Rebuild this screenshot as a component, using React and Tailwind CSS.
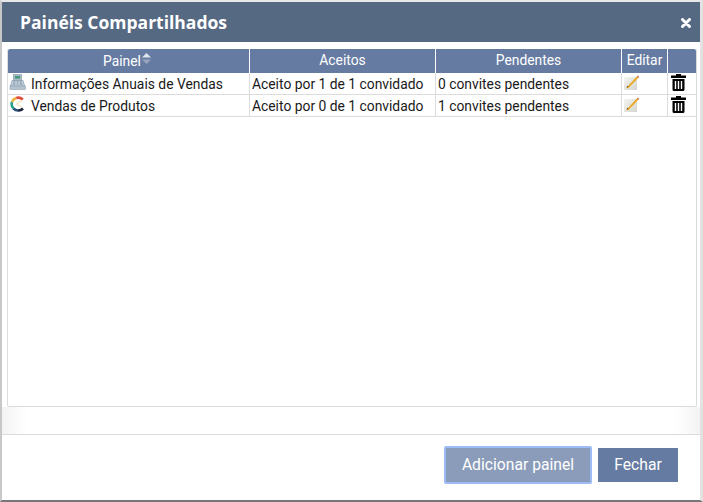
import React from "react";

const colunas = "grid grid-cols-[242px_186px_186px_46px_29px]";

const CashIcon = () => (
  <svg viewBox="0 0 17 17" className="w-[17px] h-[17px] block">
    <rect x="4.500" y="0.500" width="8" height="6" fill="#a9bac6" stroke="#73899a" strokeWidth="0.500" />
    <rect x="6" y="2" width="5" height="2.500" fill="#3f9a78" />
    <path d="M3 6.500h11l1.500 5.500h-14z" fill="#d3dee7" stroke="#8094a6" strokeWidth="0.700" />
    <path d="M4 8h2.500M7.500 8h2M10.500 8H13M3.500 10h3M7.500 10h2M10.500 10h3" stroke="#6d8496" strokeWidth="1" />
    <rect x="1" y="12" width="15.500" height="3.500" fill="#b4c3d0" stroke="#8094a6" strokeWidth="0.500" />
  </svg>
);

const ChartIcon = () => (
  <svg viewBox="0 0 16 16" className="w-4 h-4 block ml-[1px]" fill="none">
    <g strokeWidth="2.600">
      <path d="M12.800 3.600A6.500 6.500 0 0 0 6.200 2" stroke="#e14b3f" />
      <path d="M6.200 2A6.500 6.500 0 0 0 2 6" stroke="#eeb23a" />
      <path d="M2 6A6.500 6.500 0 0 0 3.500 12.500" stroke="#27a08c" />
      <path d="M3.500 12.500A6.500 6.500 0 0 0 8 14.500" stroke="#27527a" />
      <path d="M8 14.500A6.500 6.500 0 0 0 13 12.500" stroke="#1a2340" />
    </g>
    <path d="M6.500 8L12 4.500M6.500 8L12 11.500" stroke="#f0d9a0" strokeWidth="1" />
  </svg>
);

const PencilIcon = ({ id }) => (
  <svg viewBox="0 0 16 16" className="w-4 h-4 block">
    <defs>
      <linearGradient id={id} x1="0" y1="0" x2="1" y2="1">
        <stop offset="0" stopColor="#f4f4f2" />
        <stop offset="1" stopColor="#d4d4d0" />
      </linearGradient>
    </defs>
    <rect x="0" y="3" width="13" height="13" fill={`url(#${id})`} />
    <path d="M2.500 13.500L12.800 2.500l1.500 1.400L4 14.500z" fill="#e9ac2c" />
    <path d="M12.800 2.500l1-1 1.500 1.400-1 1z" fill="#c96f58" />
    <path d="M2.500 13.500l.8-1.800 1.200 1.200z" fill="#5c4c30" />
  </svg>
);

const TrashIcon = () => (
  <svg viewBox="0 0 15 17" className="w-[15px] h-[17px] block" fill="#000">
    <path d="M5 0h5v1.500h5V4H0V1.500h5z" />
    <path fillRule="evenodd" d="M1.500 5h12v10.500a1.500 1.500 0 0 1-1.500 1.500H3a1.500 1.500 0 0 1-1.500-1.500zM3.800 7v8h1.400V7zM6.800 7v8h1.400V7zM9.800 7v8h1.400V7z" />
  </svg>
);

const rows = [
  { nome: "Informações Anuais de Vendas", aceitos: "Aceito por 1 de 1 convidado", pendentes: "0 convites pendentes", icone: <CashIcon /> },
  { nome: "Vendas de Produtos", aceitos: "Aceito por 0 de 1 convidado", pendentes: "1 convites pendentes", icone: <ChartIcon /> },
];

export default function App() {
  return (
    <div className="font-['Roboto','Open_Sans',sans-serif] w-[703px] h-[502px] bg-white flex flex-col text-[13.850px] text-[#1a1a1a] overflow-hidden border-l-2 border-t-2 border-r-[3px] border-b-2 border-l-[#c8c8c8] border-t-[#e8e8e8] border-r-[#e2e2e2] border-b-[#777]">
      <div className="h-10 shrink-0 bg-[#566982] flex items-center justify-between pl-[18px] pr-[9px] pt-[1px] text-white">
        <span className="font-['Open_Sans',sans-serif] text-[17.500px] font-bold leading-none">Painéis Compartilhados</span>
        <svg viewBox="0 0 10 10" className="w-[10px] h-[10px]">
          <path d="M1.500 1.500l7 7M8.500 1.500l-7 7" stroke="#fff" strokeWidth="3" strokeLinecap="round" />
        </svg>
      </div>
      <div className="flex-1 flex flex-col min-h-0">
        <div className="flex-1 min-h-0 pt-[7px] pl-[5px] pr-[3px]">
          <div className="h-full bg-white border border-[#dcdcdc] rounded-[2px] border-t-0">
            <div className={`${colunas} h-[24px] bg-[#667ba1] text-white leading-[23px] text-center rounded-t-[2px] divide-x divide-white`}>
              <div className="flex items-center justify-center pr-[3px]">
                Painel
                <svg viewBox="0 0 9 11" className="w-[9px] h-[11px] -mt-[5px] ml-[1px]">
                  <path d="M4.500 0l4.500 4.500H0z" fill="#e0e4ec" />
                  <path d="M4.500 11L0 6.500h9z" fill="#98a6bf" />
                </svg>
              </div>
              <div>Aceitos</div>
              <div>Pendentes</div>
              <div>Editar</div>
              <div></div>
            </div>
            {rows.map((row, i) => (
              <div key={row.nome} className={`${colunas} h-[22px] border-b border-[#dcdcdc] divide-x divide-[#dcdcdc] leading-[22px]`}>
                <div className="flex items-center pl-[1px] gap-[5px]">
                  <span className="-mt-[4px]">{row.icone}</span>
                  <span>{row.nome}</span>
                </div>
                <div className="pl-[2px] whitespace-nowrap">{row.aceitos}</div>
                <div className="pl-[2px] whitespace-nowrap">{row.pendentes}</div>
                <div className="pl-[2px] pt-[1px]">
                  <PencilIcon id={`papel-${i}`} />
                </div>
                <div className="pl-[3px] pt-[1px]">
                  <TrashIcon />
                </div>
              </div>
            ))}
          </div>
        </div>
        <div className="h-[27px] shrink-0 bg-[linear-gradient(to_right,#f3f3f3,#ffffff_25px,#ffffff_calc(100%-25px),#f3f3f3)]"></div>
      </div>
      <div className="h-[66px] shrink-0 border-t border-[#dcdcdc] flex items-start justify-end pt-[11px] pr-[22px] gap-[6px] text-[15.700px]">
        <button className="h-[38px] w-[148px] bg-[#8a9cb9] border-2 border-[#9dbcf5] rounded-[2px] text-white">Adicionar painel</button>
        <button className="h-[34px] w-[80px] mt-[2px] bg-[#667ba1] text-white">Fechar</button>
      </div>
    </div>
  );
}
